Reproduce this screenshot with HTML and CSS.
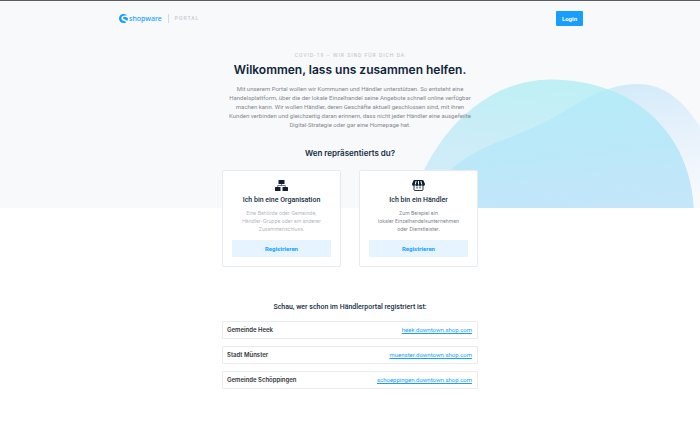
FILE: index.html
```html
<!DOCTYPE html>
<html lang="de">
<head>
<meta charset="utf-8">
<meta name="viewport" content="width=device-width, initial-scale=1">
<title>shopware Portal</title>
<link rel="stylesheet" href="styles.css">
</head>
<body>
<div class="hero">
  <svg class="waves" viewBox="400 70 300 138" aria-hidden="true">
    <defs>
      <linearGradient id="dome" x1="0.6" y1="0" x2="0.4" y2="1">
        <stop offset="0" stop-color="#bdf0f5"/>
        <stop offset="0.5" stop-color="#cbedf8"/>
        <stop offset="1" stop-color="#d3ebfa"/>
      </linearGradient>
      <linearGradient id="wave" x1="0.3" y1="0" x2="0.6" y2="1">
        <stop offset="0" stop-color="#cce9f8"/>
        <stop offset="0.45" stop-color="#e3f0fb"/>
        <stop offset="1" stop-color="#f7f9fc"/>
      </linearGradient>
      <linearGradient id="overlap" x1="0.35" y1="0.2" x2="0.55" y2="1">
        <stop offset="0" stop-color="#b7ebf8"/>
        <stop offset="0.5" stop-color="#bbe8f9"/>
        <stop offset="1" stop-color="#c3e6f9"/>
      </linearGradient>
      <clipPath id="domeClip"><path d="M410 208C424 152 473 80 551 79.500C635 80 690 134 693.500 208Z"/></clipPath>
    </defs>
    <path fill="url(#wave)" d="M422 208C432 186 450 166 476 152C508 136 534 130 563 112C588 97 610 84 638 84C664 84 684 101 700 127V208Z"/>
    <path fill="url(#dome)" d="M410 208C424 152 473 80 551 79.500C635 80 690 134 693.500 208Z"/>
    <path clip-path="url(#domeClip)" fill="url(#overlap)" d="M422 208C432 186 450 166 476 152C508 136 534 130 563 112C588 97 610 84 638 84C664 84 684 101 700 127V208Z"/>
  </svg>

  <header class="topbar">
    <div class="brand">
      <svg class="brand-mark" viewBox="0 0 18 18" aria-hidden="true">
        <path fill="#189eff" d="M15.500 2.300C13.700.900 11.500 0 9 0C4 0 0 4 0 9s4 9 9 9c2 0 3.800-.600 5.300-1.700c.300-.300.200-.600-.200-.700C9 14.500 4.600 12.500 4.600 8.400C4.600 4.700 8 2.800 12 2.800c1.200 0 2.300.100 3.300.200c.500 0 .600-.400.200-.700Z"/>
        <path fill="#189eff" d="M17.900 8.700C16.200 7.100 13.700 6.200 11 6.200c-1.700 0-3 .500-3 1.700c0 2.700 5.900 2.400 8 5.600c.300.400.600.400.800 0c.900-1.300 1.300-3 1.100-4.800Z"/>
      </svg>
      <span class="brand-name">shopware</span>
      <span class="brand-sub">PORTAL</span>
    </div>
    <button class="login" type="button">Login</button>
  </header>

  <section class="intro">
    <p class="eyebrow">COVID-19 – WIR SIND FÜR DICH DA</p>
    <h1>Wilkommen, lass uns zusammen helfen.</h1>
    <p class="lead">Mit unserem Portal wollen wir Kommunen und Händler unterstützen. So entsteht eine<br>Handelsplattform, über die der lokale Einzelhandel seine Angebote schnell online verfügbar<br>machen kann. Wir wollen Händler, deren Geschäfte aktuell geschlossen sind, mit ihren<br>Kunden verbinden und gleichzeitig daran erinnern, dass nicht jeder Händler eine ausgefeilte<br>Digital-Strategie oder gar eine Homepage hat.</p>
    <h2>Wen repräsentierts du?</h2>
  </section>

  <div class="cards">
    <article class="card">
      <svg class="card-icon" viewBox="0 0 26 22" aria-hidden="true">
        <g fill="#0f1f33"><rect x="7" y="0" width="12" height="8" rx="1"/><rect x="0" y="14" width="11" height="8" rx="1"/><rect x="15" y="14" width="11" height="8" rx="1"/></g>
        <path d="M13 8v3M5.500 14v-3h15v3" fill="none" stroke="#0f1f33" stroke-width="1.200"/>
      </svg>
      <h3>Ich bin eine Organisation</h3>
      <p class="muted">Eine Behörde oder Gemeinde,<br>Händler-Gruppe oder ein anderer<br>Zusammenschluss.</p>
      <button class="register" type="button">Registrieren</button>
    </article>
    <article class="card">
      <svg class="card-icon" viewBox="0 0 26 22" aria-hidden="true">
        <path fill="#0f1f33" d="M5 0h16c1 0 1.500.400 2 1.200L26 8c0 2.500-1.500 4-3.500 4c-1.500 0-2.500-.700-3.200-1.700c-.700 1-1.700 1.700-3 1.700s-2.600-.700-3.300-1.700c-.700 1-2 1.700-3.300 1.700s-2.300-.700-3-1.700C6 11.300 5 12 3.500 12C1.500 12 0 10.500 0 8l3-6.800C3.500.400 4 0 5 0Z"/>
        <path d="M8.200 2L6.600 9M17.800 2l1.600 7M13 2v7" fill="none" stroke="#fff" stroke-width="2"/>
        <path d="M4 12v7c0 1.400.600 2 2 2h14c1.400 0 2-.600 2-2v-7M10 13v4M16 13v4" fill="none" stroke="#0f1f33" stroke-width="1.800"/>
      </svg>
      <h3>Ich bin ein Händler</h3>
      <p>Zum Beispiel ein<br>lokaler Einzelhandelsunternehmen<br>oder Dienstleister.</p>
      <button class="register" type="button">Registrieren</button>
    </article>
  </div>
</div>

<main class="registered">
  <h2>Schau, wer schon im Händlerportal registriert ist:</h2>
  <ul>
    <li><span>Gemeinde Heek</span><a href="#heek">heek.downtown.shop.com</a></li>
    <li><span>Stadt Münster</span><a href="#muenster">muenster.downtown.shop.com</a></li>
    <li><span>Gemeinde Schöppingen</span><a href="#schoeppingen">schoeppingen.downtown.shop.com</a></li>
  </ul>
</main>
</body>
</html>
```
FILE: styles.css
```css
* {
  box-sizing: border-box;
}

body {
  margin: 0;
  background: #fff;
  color: #142d44;
  font-family: Roboto, "Liberation Sans", sans-serif;
  font-size: 6px;
}

h1, h2, h3, p, ul {
  margin: 0;
  padding: 0;
}

button {
  border: 0;
  font-family: inherit;
  cursor: pointer;
}

.hero {
  position: relative;
  border-top: 1px solid #5c5c63;
  background: #f8f9fb;
}

.hero::after {
  content: "";
  display: table;
}

.waves {
  position: absolute;
  right: 0;
  bottom: 0;
  width: 300px;
  height: 138px;
}

.topbar {
  position: relative;
  display: flex;
  justify-content: space-between;
  align-items: center;
  max-width: 466px;
  margin: 0 auto;
  padding: 10px 0 0 2px;
}

.brand {
  display: flex;
  align-items: center;
}

.brand-mark {
  width: 9px;
  height: 9px;
}

.brand-name {
  margin-left: 1px;
  color: #189eff;
  font-family: "Noto Sans", sans-serif;
  font-size: 7px;
  font-weight: 500;
  line-height: 9px;
}

.brand-sub {
  margin-left: 6px;
  padding-left: 6px;
  border-left: 1px solid #d5dae0;
  color: #c3c8d0;
  font-size: 5px;
  font-weight: 500;
  letter-spacing: 1px;
  line-height: 9px;
}

.login {
  padding: 0 6px;
  border-radius: 1px;
  background: #189eff;
  color: #fff;
  font-size: 6px;
  font-weight: 700;
  line-height: 15px;
}

.intro {
  position: relative;
  padding-top: 25px;
  text-align: center;
}

.eyebrow {
  color: #bcc1c8;
  font-size: 5px;
  letter-spacing: 1px;
  line-height: 8px;
}

h1 {
  margin-top: 3px;
  color: #0f2438;
  font-family: Inter, sans-serif;
  font-size: 12px;
  font-weight: 600;
  line-height: 16px;
}

.lead {
  margin-top: 6px;
  color: #85898f;
  font-size: 6px;
  line-height: 9px;
}

.intro h2 {
  margin-top: 18px;
  font-family: Inter, sans-serif;
  font-size: 8px;
  font-weight: 600;
  line-height: 12px;
}

.cards {
  position: relative;
  display: grid;
  grid-template-columns: 1fr 1fr;
  gap: 18px;
  max-width: 256px;
  margin: 11px auto -59px;
}

.card {
  display: flex;
  flex-direction: column;
  align-items: center;
  padding: 9px;
  border: 1px solid #e6ebf0;
  border-radius: 2px;
  background: #fff;
  text-align: center;
}

.card-icon {
  width: 13px;
  height: 11px;
}

.card h3 {
  margin-top: 4px;
  font-size: 7px;
  font-weight: 500;
  line-height: 10px;
}

.card p {
  margin-top: 4px;
  color: #7d8288;
  font-family: Inter, sans-serif;
  font-size: 5px;
  line-height: 8px;
}

.card .muted {
  color: #b3b7bd;
}

.register {
  align-self: stretch;
  margin-top: 7px;
  padding: 0;
  background: #e6f4ff;
  color: #189eff;
  font-size: 6px;
  font-weight: 700;
  line-height: 17px;
}

.registered {
  max-width: 256px;
  margin: 0 auto;
  padding: 94px 0 36px;
}

.registered h2 {
  font-size: 7px;
  font-weight: 500;
  line-height: 10px;
  text-align: center;
}

.registered ul {
  display: grid;
  gap: 7px;
  margin-top: 9px;
  list-style: none;
}

.registered li {
  display: flex;
  justify-content: space-between;
  padding: 0 5px 0 4px;
  border: 1px solid #e9ecef;
  border-radius: 1px;
  color: #33363a;
  font-size: 6px;
  line-height: 16px;
}

.registered span {
  font-family: Inter, sans-serif;
  font-weight: 600;
}

.registered a {
  color: #189eff;
}
```
